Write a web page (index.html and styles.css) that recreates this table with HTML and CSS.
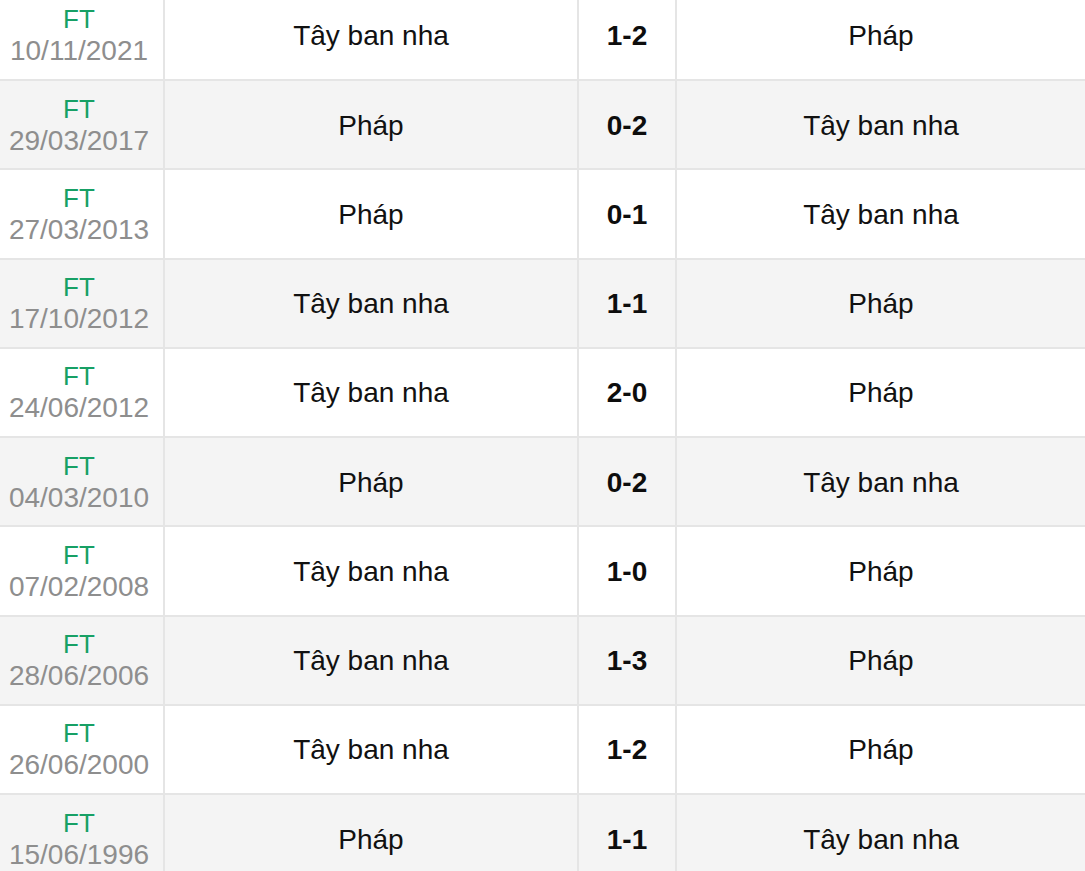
FILE: index.html
```html
<!DOCTYPE html>
<html lang="vi">
<head>
<meta charset="utf-8">
<title>Lịch sử đối đầu</title>
<link rel="stylesheet" href="styles.css">
</head>
<body>
<div class="h2h">
  <div class="row">
    <div class="cell date-cell"><span class="status">FT</span><span class="date">10/11/2021</span></div>
    <div class="cell team">Tây ban nha</div>
    <div class="cell score">1-2</div>
    <div class="cell team">Pháp</div>
  </div>
  <div class="row alt">
    <div class="cell date-cell"><span class="status">FT</span><span class="date">29/03/2017</span></div>
    <div class="cell team">Pháp</div>
    <div class="cell score">0-2</div>
    <div class="cell team">Tây ban nha</div>
  </div>
  <div class="row">
    <div class="cell date-cell"><span class="status">FT</span><span class="date">27/03/2013</span></div>
    <div class="cell team">Pháp</div>
    <div class="cell score">0-1</div>
    <div class="cell team">Tây ban nha</div>
  </div>
  <div class="row alt">
    <div class="cell date-cell"><span class="status">FT</span><span class="date">17/10/2012</span></div>
    <div class="cell team">Tây ban nha</div>
    <div class="cell score">1-1</div>
    <div class="cell team">Pháp</div>
  </div>
  <div class="row">
    <div class="cell date-cell"><span class="status">FT</span><span class="date">24/06/2012</span></div>
    <div class="cell team">Tây ban nha</div>
    <div class="cell score">2-0</div>
    <div class="cell team">Pháp</div>
  </div>
  <div class="row alt">
    <div class="cell date-cell"><span class="status">FT</span><span class="date">04/03/2010</span></div>
    <div class="cell team">Pháp</div>
    <div class="cell score">0-2</div>
    <div class="cell team">Tây ban nha</div>
  </div>
  <div class="row">
    <div class="cell date-cell"><span class="status">FT</span><span class="date">07/02/2008</span></div>
    <div class="cell team">Tây ban nha</div>
    <div class="cell score">1-0</div>
    <div class="cell team">Pháp</div>
  </div>
  <div class="row alt">
    <div class="cell date-cell"><span class="status">FT</span><span class="date">28/06/2006</span></div>
    <div class="cell team">Tây ban nha</div>
    <div class="cell score">1-3</div>
    <div class="cell team">Pháp</div>
  </div>
  <div class="row">
    <div class="cell date-cell"><span class="status">FT</span><span class="date">26/06/2000</span></div>
    <div class="cell team">Tây ban nha</div>
    <div class="cell score">1-2</div>
    <div class="cell team">Pháp</div>
  </div>
  <div class="row alt">
    <div class="cell date-cell"><span class="status">FT</span><span class="date">15/06/1996</span></div>
    <div class="cell team">Pháp</div>
    <div class="cell score">1-1</div>
    <div class="cell team">Tây ban nha</div>
  </div>
</div>
</body>
</html>
```

FILE: styles.css
```css
html, body {
  margin: 0;
  padding: 0;
  background: #ffffff;
  overflow: hidden;
}

body {
  font-family: "Liberation Sans", Arial, sans-serif;
  color: #111111;
}

.h2h {
  margin-top: -8.25px;
  display: flex;
  flex-direction: column;
}

.row {
  display: grid;
  grid-template-columns: 163px 414px 98px 1fr;
  height: 87.25px;
  border-bottom: 2px solid #e5e5e5;
  background: #ffffff;
}

.row.alt {
  background: #f4f4f4;
}

.cell {
  display: flex;
  align-items: center;
  justify-content: center;
  border-left: 2px solid #e5e5e5;
  font-size: 28px;
  line-height: 32px;
}

.cell.team,
.cell.score {
  padding-top: 2px;
}

.cell.date-cell {
  border-left: none;
  flex-direction: column;
  padding-right: 5px;
}

.status {
  display: block;
  color: #17a065;
  font-size: 26px;
  line-height: 31px;
}

.date {
  display: block;
  color: #8e8e8e;
  font-size: 28px;
  line-height: 31px;
}

.score {
  font-weight: bold;
  color: #0d0d0d;
}
```
